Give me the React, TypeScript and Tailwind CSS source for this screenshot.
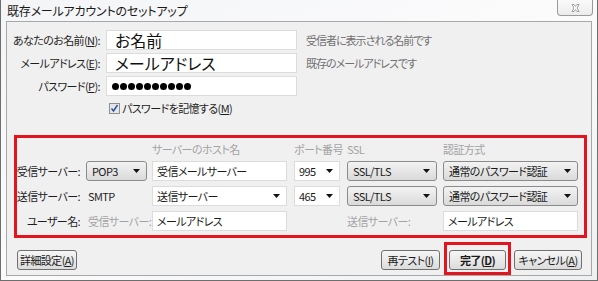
import React from "react";

const Arrow = () => (
  <svg width="7" height="4" viewBox="0 0 7 4" className="shrink-0">
    <path d="M0 0h7L3.5 4z" fill="#111" />
  </svg>
);

const U = ({ c }: { c: string }) => <span className="underline underline-offset-[1px]">{c}</span>;

const GraySelect = ({ text, w }: { text: string; w: string }) => (
  <div className={`${w} h-[20px] flex items-center justify-between pl-[5px] pr-[6px] border border-[#8b8b8b] rounded-[3px] bg-gradient-to-b from-[#f3f3f3] to-[#dadada] text-[#1a1a1a]`}>
    <span>{text}</span>
    <Arrow />
  </div>
);

const WhiteCombo = ({ text, w }: { text: string; w: string }) => (
  <div className={`${w} h-[20px] flex items-center justify-between pl-[4px] pr-[6px] border border-[#dcdcdc] bg-white text-[#1a1a1a]`}>
    <span>{text}</span>
    <Arrow />
  </div>
);

const TextBox = ({ text, w }: { text: string; w: string }) => (
  <div className={`${w} h-[20px] flex items-center pl-[4px] border border-[#dcdcdc] bg-white text-[#1a1a1a]`}>
    {text}
  </div>
);

const Btn = ({ children, w, bold }: { children: React.ReactNode; w: string; bold?: boolean }) => (
  <div className={`${w} h-[20px] flex items-center justify-center border border-[#707070] rounded-[3px] bg-gradient-to-b from-[#f6f6f6] to-[#dcdcdc] text-[#1a1a1a] ${bold ? "font-bold" : ""}`}>
    {children}
  </div>
);

export default function App() {
  return (
    <div className="w-[598px] h-[281px] overflow-hidden bg-white whitespace-nowrap [font-family:'Noto_Sans_CJK_JP','Noto_Sans',sans-serif] [font-feature-settings:'palt']">
      <div className="w-[598px] h-[281px] flex flex-col border-x border-b border-[#6e6e6e] bg-gradient-to-br from-[#f4f5f7] via-[#fbfbfc] to-[#eef0f2] px-[5px] pb-[4px] relative">
        {/* title bar */}
        <div className="h-[21px] flex items-center pl-[1px] text-[12px] tracking-[-0.2px] text-[#1a1a1a]">既存メールアカウントのセットアップ</div>
        <div className="absolute top-0 right-[4px] w-[36px] h-[16px] border border-t-0 border-[#9a9a9a] rounded-b-[4px] bg-gradient-to-b from-[#fafafa] to-[#ececec] flex items-center justify-center">
          <svg width="9" height="8" viewBox="0 0 9 8">
            <path d="M1 0.5h2l1.5 2 1.5-2h2L6 4l2 3.5H6L4.5 5.5 3 7.5H1L3 4z" fill="#fff" stroke="#8a8a8a" strokeWidth="0.8" />
          </svg>
        </div>
        {/* content panel */}
        <div className="flex-1 border border-[#a8a8a8] bg-[#f0f0f0] flex flex-col text-[11px] tracking-[-0.6px] text-[#1e1e1e]">
          <div className="flex flex-col gap-[3px] pt-[8px]">
            <div className="flex items-center h-[20px]">
              <div className="w-[93px] text-right">あなたのお名前(<U c="N" />):</div>
              <div className="ml-[6px] w-[191px] h-[20px] border border-[#dcdcdc] bg-white flex items-center pl-[8px] text-[16px] tracking-normal text-[#111]">お名前</div>
              <div className="ml-[9px] text-[#707070] tracking-[-1px]">受信者に表示される名前です</div>
            </div>
            <div className="flex items-center h-[20px]">
              <div className="w-[93px] text-right">メールアドレス(<U c="E" />):</div>
              <div className="ml-[6px] w-[191px] h-[20px] border border-[#dcdcdc] bg-white flex items-center pl-[8px] text-[16px] tracking-normal text-[#111]">メールアドレス</div>
              <div className="ml-[9px] text-[#707070] tracking-[-1px]">既存のメールアドレスです</div>
            </div>
            <div className="flex items-center h-[20px]">
              <div className="w-[93px] text-right">パスワード(<U c="P" />):</div>
              <div className="ml-[6px] w-[191px] h-[20px] border border-[#dcdcdc] bg-white flex items-center pl-[5px] gap-[1px]">
                {Array.from({ length: 10 }).map((_, i) => (
                  <span key={i} className="w-[7px] h-[7px] rounded-full bg-black" />
                ))}
              </div>
            </div>
          </div>
          <div className="flex items-center h-[12px] mt-[6px] ml-[102px] gap-[2px]">
            <svg width="11" height="11" viewBox="0 0 11 11">
              <rect x="0.5" y="0.5" width="10" height="10" fill="#e4e6ea" stroke="#8e8f8f" />
              <path d="M2.5 5.5l2 2.5 4-6" fill="none" stroke="#2c4c9c" strokeWidth="1.4" />
            </svg>
            <span>パスワードを記憶する(<U c="M" />)</span>
          </div>
          {/* red annotated server section */}
          <div className="mt-[21px] ml-[7px] mr-[4px] border-[3px] border-[#e4141f] pb-[4px]">
            <div className="grid grid-cols-[69px_66px_142px_53px_96px_135px] grid-rows-[18px_20px_20px_20px] gap-y-[5px] [&>*:nth-child(-n+6)]:mb-[-5px]">
              <div />
              <div />
              <div className="flex items-center text-[#a3a3a3]">サーバーのホスト名</div>
              <div className="flex items-center text-[#a3a3a3]">ポート番号</div>
              <div className="flex items-center text-[#a3a3a3]">SSL</div>
              <div className="flex items-center text-[#a3a3a3]">認証方式</div>

              <div className="flex items-center justify-end pr-[6px]">受信サーバー:</div>
              <GraySelect text="POP3" w="w-[61px]" />
              <TextBox text="受信メールサーバー" w="w-[135px]" />
              <WhiteCombo text="995" w="w-[46px]" />
              <GraySelect text="SSL/TLS" w="w-[90px]" />
              <GraySelect text="通常のパスワード認証" w="w-[135px]" />

              <div className="flex items-center justify-end pr-[6px]">送信サーバー:</div>
              <div className="flex items-center pl-[2px]">SMTP</div>
              <WhiteCombo text="送信サーバー" w="w-[135px]" />
              <WhiteCombo text="465" w="w-[46px]" />
              <GraySelect text="SSL/TLS" w="w-[90px]" />
              <GraySelect text="通常のパスワード認証" w="w-[135px]" />

              <div className="flex items-center justify-end pr-[6px]">ユーザー名:</div>
              <div className="flex items-center pl-[2px] text-[#a3a3a3]">受信サーバー:</div>
              <TextBox text="メールアドレス" w="w-[135px]" />
              <div />
              <div className="flex items-center text-[#a3a3a3]">送信サーバー:</div>
              <TextBox text="メールアドレス" w="w-[135px]" />
            </div>
          </div>
          {/* bottom buttons */}
          <div className="flex items-end mt-[4px] ml-[10px] mr-[9px]">
            <div className="mb-[5px]">
              <Btn w="w-[60px]">詳細設定(<U c="A" />)</Btn>
            </div>
            <div className="flex-1" />
            <div className="mb-[5px]">
              <Btn w="w-[59px]">再テスト(<U c="I" />)</Btn>
            </div>
            <div className="ml-[4px] border-[3px] border-[#e4141f] pt-[5px] pb-[2px] px-[2px]">
              <Btn w="w-[57px]" bold>完了(<U c="D" />)</Btn>
            </div>
            <div className="ml-[3px] mb-[5px]">
              <Btn w="w-[68px]">キャンセル(<U c="A" />)</Btn>
            </div>
          </div>
        </div>
      </div>
    </div>
  );
}
